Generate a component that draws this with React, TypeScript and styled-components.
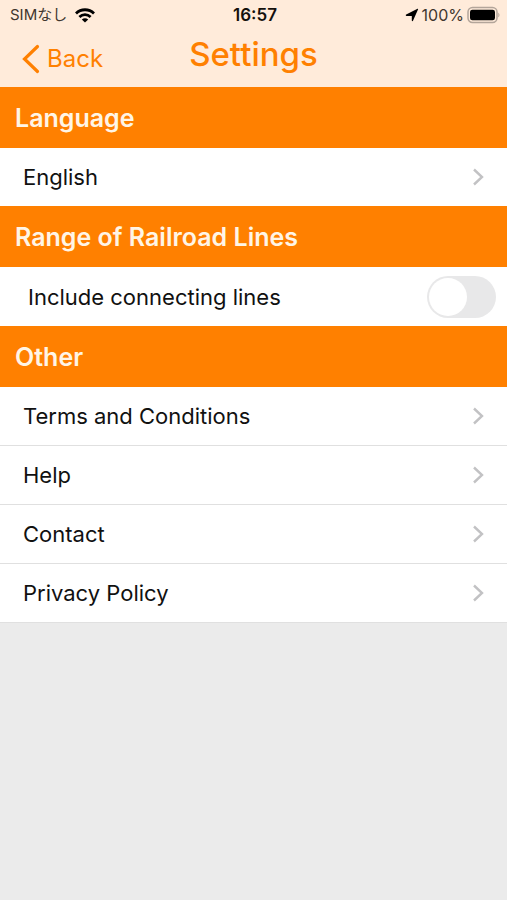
import React from "react";
import styled, { createGlobalStyle } from "styled-components";

const GlobalStyle = createGlobalStyle`
  *, *::before, *::after { box-sizing: border-box; }
  body {
    margin: 0;
    background: #ebebeb;
    color: #111;
    font-family: Inter, "Noto Sans CJK JP", sans-serif;
  }
`;

const Screen = styled.div`
  min-height: 100vh;
  background: #ebebeb;
`;

const TopArea = styled.header`
  background: #ffebda;
`;

const StatusBar = styled.div`
  display: grid;
  grid-template-columns: 1fr auto 1fr;
  align-items: center;
  height: 30px;
  padding: 0 7px 0 10px;
  font-size: 16px;
  line-height: 20px;
  color: #40362e;
`;

const StatusGroup = styled.div<{ $end?: boolean }>`
  display: flex;
  align-items: center;
  gap: ${(p) => (p.$end ? 3 : 8)}px;
  justify-content: ${(p) => (p.$end ? "flex-end" : "flex-start")};
`;

const Carrier = styled.span`
  font-size: 15px;
`;

const Clock = styled.time`
  color: #14100c;
  font-size: 17px;
  font-weight: 600;
`;

const NavBar = styled.nav`
  display: grid;
  grid-template-columns: 1fr auto 1fr;
  align-items: center;
  height: 57px;
  padding: 0 20px;
`;

const BackButton = styled.button`
  display: flex;
  align-items: center;
  justify-self: start;
  gap: 7px;
  padding: 0;
  border: 0;
  background: none;
  color: #ff8000;
  font: inherit;
  font-size: 24px;
  line-height: 32px;
  cursor: pointer;
`;

const Title = styled.h1`
  margin: 0;
  padding-bottom: 10px;
  color: #ff8000;
  font-size: 33px;
  font-weight: 500;
  line-height: 40px;
`;

const SectionTitle = styled.h2`
  margin: 0;
  padding: 16px 15px 14px;
  background: #ff8000;
  color: #fff5e6;
  font-size: 25px;
  font-weight: 600;
  line-height: 31px;
`;

const List = styled.ul`
  margin: 0;
  padding: 0;
  list-style: none;
  background: #fff;
`;

const Item = styled.li<{ $divided?: boolean }>`
  border-bottom: ${(p) => (p.$divided ? "1px solid #e0e0e0" : "0")};
`;

const LinkRow = styled.a`
  display: flex;
  align-items: center;
  justify-content: space-between;
  height: 58px;
  padding: 0 23px;
  color: inherit;
  font-size: 22px;
  line-height: 28px;
  text-decoration: none;
`;

const SwitchRow = styled.label`
  display: flex;
  align-items: center;
  justify-content: space-between;
  height: 59px;
  padding: 0 11px 0 28px;
  font-size: 22px;
  line-height: 28px;
  cursor: pointer;
`;

const Switch = styled.input`
  appearance: none;
  display: flex;
  width: 69px;
  height: 42px;
  margin: 0;
  padding: 2px;
  border-radius: 21px;
  background: #e8e8e9;
  cursor: pointer;

  &::before {
    content: "";
    width: 38px;
    height: 38px;
    border-radius: 50%;
    background: #fff;
  }

  &:checked {
    justify-content: flex-end;
    background: #ff8000;
  }
`;

const WifiIcon = () => (
  <svg width="20" height="15" viewBox="0 0 20 15" aria-hidden="true">
    <g fill="none" stroke="#000" strokeWidth="2.8">
      <path d="M1 5.4C6 .5 14 .5 19 5.4" />
      <path d="M4.4 8.9c3.2-3 8-3 11.2 0" />
    </g>
    <path d="M6.8 11.4c1.9-1.6 4.5-1.6 6.4 0L10 14.6z" fill="#000" />
  </svg>
);

const LocationIcon = () => (
  <svg width="14" height="14" viewBox="0 0 14 14" aria-hidden="true">
    <path d="M13.1 1.2 8 12.8c-.3.6-1.2.5-1.2-.3V7.9H1.5C.7 7.9.5 6.9 1.2 6.6L12.5.7c.4-.2.8.1.6.5z" fill="#000" />
  </svg>
);

const BatteryIcon = () => (
  <svg width="33" height="18" viewBox="0 0 33 18" aria-hidden="true">
    <rect x="1" y="1.5" width="29" height="15" rx="4.5" fill="none" stroke="#b3a59a" strokeWidth="1.5" />
    <rect x="3" y="3.7" width="25" height="10.6" rx="2.4" fill="#000" />
    <path d="M31.3 6.7c1.5.6 1.5 4 0 4.6z" fill="#b3a59a" />
  </svg>
);

const BackIcon = () => (
  <svg width="20" height="30" viewBox="0 0 20 30" aria-hidden="true">
    <path d="M17.5 2.5 4.5 15l13 12.5" fill="none" stroke="#ff8000" strokeWidth="3.2" strokeLinecap="round" />
  </svg>
);

const Disclosure = () => (
  <svg width="12" height="18" viewBox="0 0 12 18" aria-hidden="true">
    <path d="m2 1.5 8 7.5-8 7.5" fill="none" stroke="#c2c2c4" strokeWidth="2.4" />
  </svg>
);

const otherLinks = ["Terms and Conditions", "Help", "Contact", "Privacy Policy"];

export default function App() {
  return (
    <Screen>
      <GlobalStyle />
      <TopArea>
        <StatusBar>
          <StatusGroup>
            <Carrier>SIMなし</Carrier>
            <WifiIcon />
          </StatusGroup>
          <Clock>16:57</Clock>
          <StatusGroup $end>
            <LocationIcon />
            <span>100%</span>
            <BatteryIcon />
          </StatusGroup>
        </StatusBar>
        <NavBar>
          <BackButton type="button">
            <BackIcon />
            Back
          </BackButton>
          <Title>Settings</Title>
        </NavBar>
      </TopArea>
      <main>
        <section>
          <SectionTitle>Language</SectionTitle>
          <List>
            <Item>
              <LinkRow href="#language">
                English
                <Disclosure />
              </LinkRow>
            </Item>
          </List>
        </section>
        <section>
          <SectionTitle>Range of Railroad Lines</SectionTitle>
          <List>
            <Item>
              <SwitchRow htmlFor="connecting">
                Include connecting lines
                <Switch id="connecting" type="checkbox" role="switch" />
              </SwitchRow>
            </Item>
          </List>
        </section>
        <section>
          <SectionTitle>Other</SectionTitle>
          <List>
            {otherLinks.map((label) => (
              <Item key={label} $divided>
                <LinkRow href={"#" + label.toLowerCase().replace(/ /g, "-")}>
                  {label}
                  <Disclosure />
                </LinkRow>
              </Item>
            ))}
          </List>
        </section>
      </main>
    </Screen>
  );
}
